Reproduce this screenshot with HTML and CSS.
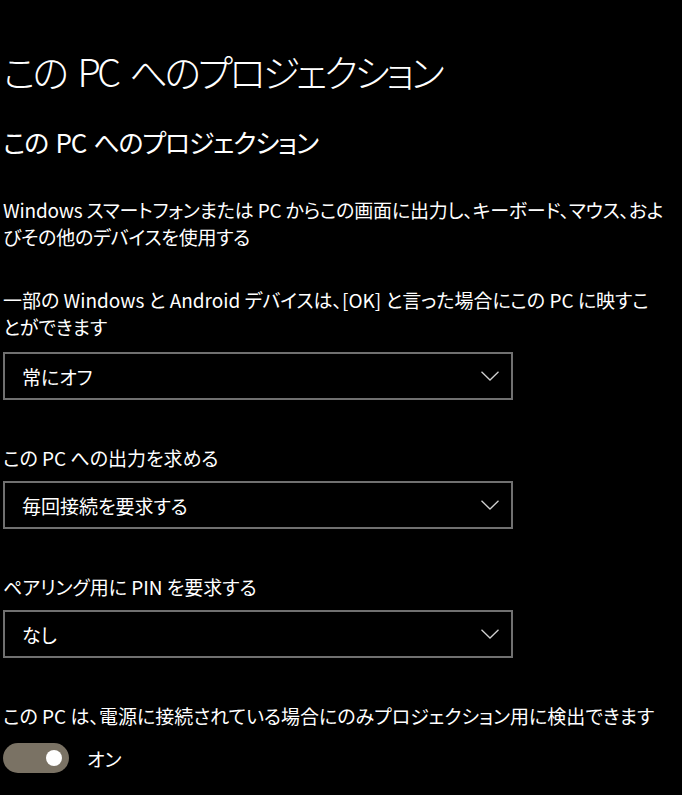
FILE: index.html
```html
<!DOCTYPE html>
<html lang="ja">
<head>
<meta charset="utf-8">
<link rel="stylesheet" href="styles.css">
</head>
<body>
<main class="page">
  <h1 class="title">この PC へのプロジェクション</h1>
  <h2 class="subtitle">この PC へのプロジェクション</h2>
  <p class="desc">Windows スマートフォンまたは PC からこの画面に出力し、キーボード、マウス、およびその他のデバイスを使用する</p>
  <section class="setting first">
    <p class="label">一部の Windows と Android デバイスは、[OK] と言った場合にこの PC に映すことができます</p>
    <div class="dropdown"><span>常にオフ</span><svg class="chev" width="18" height="10" viewBox="0 0 18 10"><polyline points="0.5,0.8 9,9 17.5,0.8" fill="none" stroke="#d0d0d0" stroke-width="1.3"/></svg></div>
  </section>
  <section class="setting">
    <p class="label">この PC への出力を求める</p>
    <div class="dropdown"><span>毎回接続を要求する</span><svg class="chev" width="18" height="10" viewBox="0 0 18 10"><polyline points="0.5,0.8 9,9 17.5,0.8" fill="none" stroke="#d0d0d0" stroke-width="1.3"/></svg></div>
  </section>
  <section class="setting">
    <p class="label">ペアリング用に PIN を要求する</p>
    <div class="dropdown"><span>なし</span><svg class="chev" width="18" height="10" viewBox="0 0 18 10"><polyline points="0.5,0.8 9,9 17.5,0.8" fill="none" stroke="#d0d0d0" stroke-width="1.3"/></svg></div>
  </section>
  <section class="setting">
    <p class="label">この PC は、電源に接続されている場合にのみプロジェクション用に検出できます</p>
    <div class="toggle-row">
      <span class="toggle"><span class="knob"></span></span>
      <span class="toggle-text">オン</span>
    </div>
  </section>
</main>
</body>
</html>
```
FILE: styles.css
```css
html, body {
  margin: 0;
  padding: 0;
  background: #000;
}
body {
  color: #fff;
  font-family: "Noto Sans CJK JP", "Noto Sans", sans-serif;
  font-feature-settings: "palt";
  width: 682px;
  height: 795px;
  overflow: hidden;
}
.page {
  padding: 47px 0 0 3px;
}
.title {
  margin: 0;
  font-size: 38px;
  font-weight: 300;
  line-height: 48px;
  letter-spacing: -3.5px;
  word-spacing: 7px;
}
.subtitle {
  margin: 29px 0 0;
  font-size: 26px;
  font-weight: 400;
  line-height: 36px;
  letter-spacing: -1.3px;
  word-spacing: 3px;
}
.desc, .label {
  margin: 0;
  font-size: 19px;
  line-height: 27px;
  width: 662px;
}
.desc {
  margin-top: 36px;
  letter-spacing: -0.2px;
}
.setting.first {
  margin-top: 36px;
}
.setting {
  margin-top: 44px;
}
.setting.first .dropdown {
  margin-top: 12px;
}
.dropdown {
  margin-top: 10px;
  box-sizing: border-box;
  width: 510px;
  height: 48px;
  border: 2px solid #707070;
  display: flex;
  align-items: center;
  justify-content: space-between;
  padding: 0 12px 0 17px;
  font-size: 19px;
}
.chev {
  display: block;
}
.toggle-row {
  margin-top: 14px;
  display: flex;
  align-items: center;
  gap: 18px;
}
.toggle {
  width: 66px;
  height: 30px;
  border-radius: 15px;
  background: #7a7264;
  display: flex;
  align-items: center;
  justify-content: flex-end;
  padding-right: 7px;
  box-sizing: border-box;
}
.knob {
  width: 16px;
  height: 16px;
  border-radius: 50%;
  background: #fff;
}
.toggle-text {
  font-size: 19px;
}
```
